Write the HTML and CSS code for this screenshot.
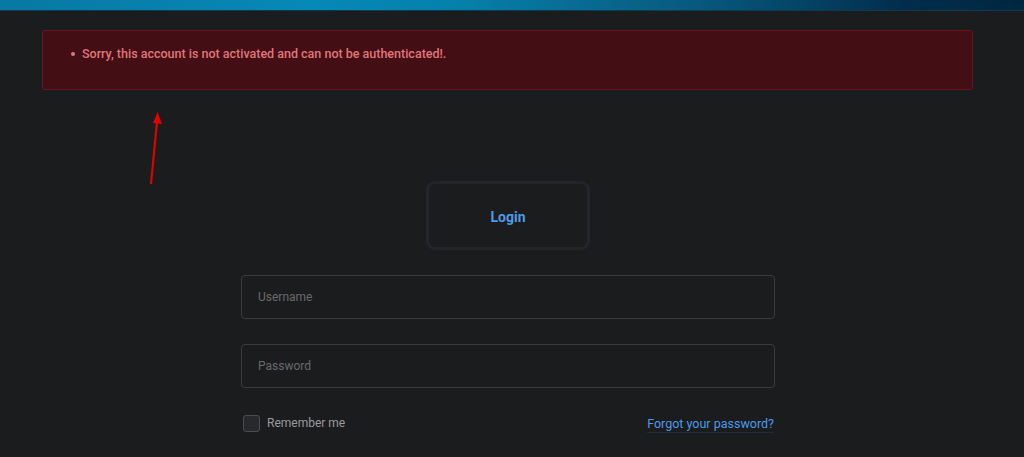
FILE: index.html
```html
<!DOCTYPE html>
<html>
<head>
<meta charset="utf-8">
<link rel="stylesheet" href="styles.css">
</head>
<body>
<div class="topbar"></div>
<div class="page">
  <div class="alert">
    <ul class="alert-list">
      <li>Sorry, this account is not activated and can not be authenticated!.</li>
    </ul>
  </div>
  <svg class="arrow" width="20" height="80" viewBox="0 0 20 80">
    <line x1="4" y1="76" x2="10" y2="14" stroke="#e00000" stroke-width="2.2"/>
    <polygon points="10.5,4 15,16 6,15" fill="#e00000"/>
  </svg>
  <div class="login-tab"><span>Login</span></div>
  <form class="form">
    <div class="field">Username</div>
    <div class="field">Password</div>
    <div class="row">
      <label class="remember"><span class="check"></span>Remember me</label>
      <a class="forgot">Forgot your password?</a>
    </div>
  </form>
</div>
</body>
</html>
```
FILE: styles.css
```css
html, body {
  margin: 0;
  padding: 0;
  background: #1b1c1e;
  font-family: Roboto, "Liberation Sans", sans-serif;
  overflow: hidden;
  height: 457px;
}
.topbar {
  height: 10px;
  border-bottom: 1px solid #0d3a4f;
  background: linear-gradient(90deg, #0878a4 0%, #0883b0 20%, #0589b6 30%, #0580ab 45%, #086e96 55%, #07597e 68%, #044566 78%, #012e4c 88%, #002640 100%);
}
.page {
  position: relative;
  padding: 19px 50px 0 42px;
}
.alert {
  width: 929px;
  height: 58px;
  background: #430e14;
  border: 1px solid #651620;
  border-radius: 3px;
  box-sizing: content-box;
}
.alert-list {
  margin: 0;
  padding: 15px 0 0 39px;
  list-style: none;
  color: #e0767a;
  font-size: 12.5px;
  font-weight: 500;
  line-height: 16px;
}
.alert-list li {
  position: relative;
}
.alert-list li::before {
  content: "";
  position: absolute;
  left: -11px;
  top: 6px;
  width: 4px;
  height: 4px;
  border-radius: 50%;
  background: #e0767a;
}
.arrow {
  position: absolute;
  left: 147px;
  top: 97px;
}
.login-tab {
  margin: 91px 0 0 384px;
  width: 158px;
  height: 63px;
  border: 3px solid #232528;
  border-radius: 9px;
  display: flex;
  align-items: center;
  justify-content: center;
}
.login-tab span {
  color: #4d9ae6;
  font-weight: 700;
  font-size: 14px;
  padding-top: 2px;
}
.form {
  margin: 25px 0 0 199px;
  width: 534px;
  display: flex;
  flex-direction: column;
}
.field {
  height: 42px;
  border: 1px solid #3a3b3f;
  border-radius: 4px;
  padding-left: 16px;
  display: flex;
  align-items: center;
  color: #6a6a6a;
  font-size: 12px;
  margin-bottom: 25px;
}
.field + .field {
  margin-bottom: 26px;
}
.row {
  display: flex;
  justify-content: space-between;
  align-items: center;
  height: 18px;
}
.remember {
  display: flex;
  align-items: center;
  color: #9a9a9a;
  font-size: 12px;
  padding-left: 2px;
}
.check {
  width: 15px;
  height: 15px;
  border: 1px solid #4b4c50;
  background: #28292c;
  border-radius: 3px;
  margin-right: 7px;
}
.forgot {
  color: #4d9ae6;
  font-size: 12.5px;
  text-decoration: underline;
  text-decoration-color: #252b33;
  text-underline-offset: 4px;
  padding-right: 1px;
}
```
